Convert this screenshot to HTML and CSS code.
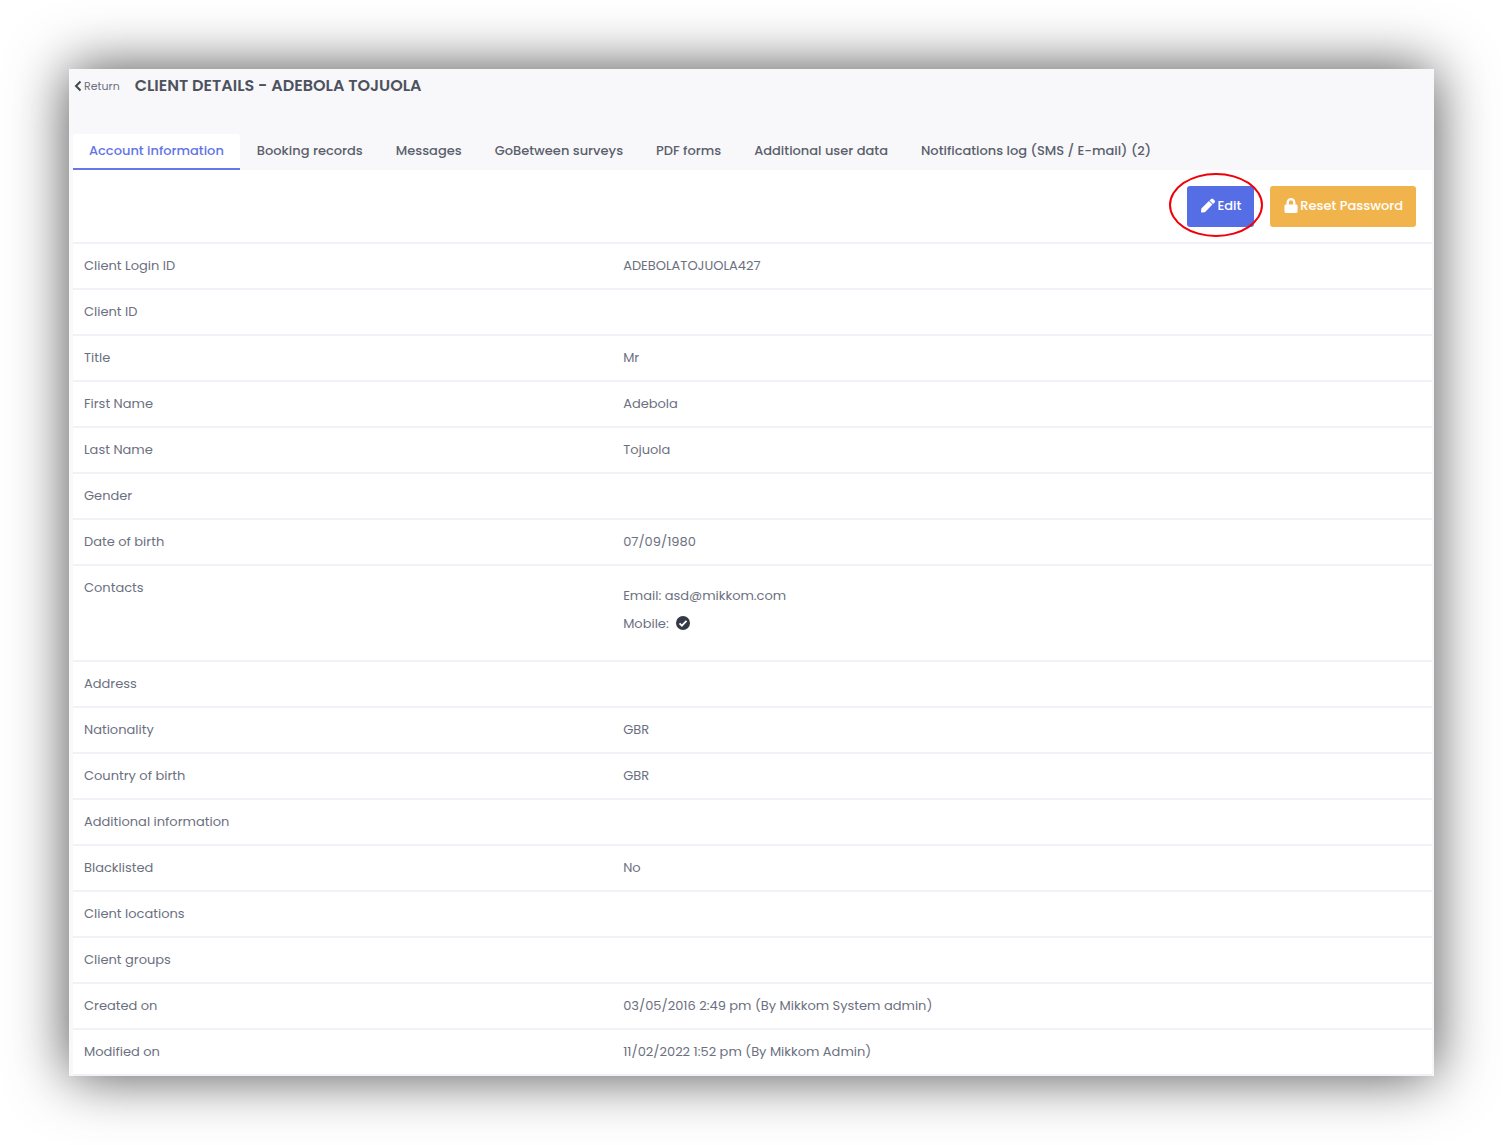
FILE: index.html
```html
<!DOCTYPE html>
<html lang="en">
<head>
<meta charset="utf-8">
<meta name="viewport" content="width=device-width, initial-scale=1">
<title>Client details - Adebola Tojuola</title>
<link rel="stylesheet" href="styles.css">
</head>
<body>
<main class="panel">
  <header class="page-head">
    <a class="return" href="#">
      <svg class="chevron" viewBox="0 0 8 12" aria-hidden="true"><path d="M6.500 1.500 2 6l4.500 4.500" fill="none" stroke="currentColor" stroke-width="2"/></svg>Return</a>
    <h1>CLIENT DETAILS - ADEBOLA TOJUOLA</h1>
  </header>
  <nav class="tabs">
    <a class="tab active" href="#" aria-current="page">Account information</a>
    <a class="tab" href="#">Booking records</a>
    <a class="tab" href="#">Messages</a>
    <a class="tab" href="#">GoBetween surveys</a>
    <a class="tab" href="#">PDF forms</a>
    <a class="tab" href="#">Additional user data</a>
    <a class="tab" href="#">Notifications log (SMS / E-mail) (2)</a>
  </nav>
  <section class="content">
    <div class="actions">
      <div class="marked">
        <button class="btn primary" type="button">
          <svg class="icon" viewBox="0 0 512 512" aria-hidden="true"><path fill="currentColor" d="M290 93 419 222 142 499 28 512A25 25 0 0 1 0 484L13 370zM498 74 438 14a48 48 0 0 0-68 0l-57 57 128 128 57-57a48 48 0 0 0 0-68z"/></svg>Edit</button>
        <span class="ring"></span>
      </div>
      <button class="btn warning" type="button">
        <svg class="icon" viewBox="0 0 448 512" aria-hidden="true"><path fill="currentColor" d="M400 224h-24v-72C376 68 308 0 224 0S72 68 72 152v72H48c-26 0-48 22-48 48v192c0 26 22 48 48 48h352c26 0 48-22 48-48V272c0-26-22-48-48-48zm-104 0H152v-72c0-40 32-72 72-72s72 32 72 72z"/></svg>Reset Password</button>
    </div>
    <table class="details">
      <tbody>
        <tr><th scope="row">Client Login ID</th><td>ADEBOLATOJUOLA427</td></tr>
        <tr><th scope="row">Client ID</th><td></td></tr>
        <tr><th scope="row">Title</th><td>Mr</td></tr>
        <tr><th scope="row">First Name</th><td>Adebola</td></tr>
        <tr><th scope="row">Last Name</th><td>Tojuola</td></tr>
        <tr><th scope="row">Gender</th><td></td></tr>
        <tr><th scope="row">Date of birth</th><td>07/09/1980</td></tr>
        <tr><th scope="row">Contacts</th><td>
          <ul class="contacts">
            <li>Email: asd@mikkom.com</li>
            <li>Mobile: <svg class="check" viewBox="0 0 14 14" role="img" aria-label="Confirmed"><circle cx="7" cy="7" r="7" fill="#343a48"/><path d="m3.500 7.300 2.400 2.400 4.600-4.800" fill="none" stroke="#fff" stroke-width="1.800"/></svg></li>
          </ul>
        </td></tr>
        <tr><th scope="row">Address</th><td></td></tr>
        <tr><th scope="row">Nationality</th><td>GBR</td></tr>
        <tr><th scope="row">Country of birth</th><td>GBR</td></tr>
        <tr><th scope="row">Additional information</th><td></td></tr>
        <tr><th scope="row">Blacklisted</th><td>No</td></tr>
        <tr><th scope="row">Client locations</th><td></td></tr>
        <tr><th scope="row">Client groups</th><td></td></tr>
        <tr><th scope="row">Created on</th><td>03/05/2016 2:49 pm (By Mikkom System admin)</td></tr>
        <tr><th scope="row">Modified on</th><td>11/02/2022 1:52 pm (By Mikkom Admin)</td></tr>
      </tbody>
    </table>
  </section>
</main>
</body>
</html>
```
FILE: styles.css
```css
* {
  box-sizing: border-box;
}

body {
  margin: 0;
  padding: 69px;
  background: #fff;
  color: #6b7080;
  font: 13px/20px Poppins, Inter, "Noto Sans", sans-serif;
}

.panel {
  padding: 0 2px 0 4px;
  background: #f8f8fb;
  box-shadow: 0 0 54px rgba(0, 0, 0, 0.7);
}

.page-head {
  display: flex;
  align-items: center;
  gap: 15px;
  height: 65px;
  padding: 7px 0 38px 1px;
}

.return {
  display: flex;
  align-items: center;
  gap: 2px;
  color: #6b7080;
  font-size: 11px;
  text-decoration: none;
}

.chevron {
  width: 8px;
  height: 12px;
  color: #41464f;
}

h1 {
  margin: 0;
  color: #4d525e;
  font-size: 16px;
  font-weight: 600;
  line-height: 20px;
}

.tabs {
  display: flex;
  gap: 1px;
}

.tab {
  height: 36px;
  padding: 7px 16px;
  border-bottom: 2px solid transparent;
  border-radius: 3px 3px 0 0;
  color: #5b606c;
  font-weight: 500;
  text-decoration: none;
  white-space: nowrap;
}

.tab.active {
  border-bottom-color: #6478e8;
  background: #fff;
  color: #6375e6;
}

.content {
  background: #fff;
}

.actions {
  display: flex;
  justify-content: flex-end;
  gap: 16px;
  padding: 16px 16px 15px;
}

.marked {
  position: relative;
}

.ring {
  position: absolute;
  inset: -13px -9px -10px -18px;
  border: 2px solid #f00008;
  border-radius: 50%;
  pointer-events: none;
}

.btn {
  display: flex;
  align-items: center;
  justify-content: center;
  gap: 2px;
  height: 41px;
  padding: 0 13px 2px 14px;
  border: 0;
  border-radius: 3px;
  color: #fff;
  font: inherit;
  font-weight: 500;
}

.primary {
  background: #556ee6;
}

.warning {
  background: #f1b44c;
}

.icon {
  width: 14px;
  height: 15px;
}

.details {
  width: 100%;
  border-collapse: separate;
  border-spacing: 0;
  border-bottom: 2px solid #f1f2f8;
  table-layout: fixed;
}

.details th,
.details td {
  height: 46px;
  padding: 12px;
  border-top: 2px solid #f1f2f8;
  font-weight: 400;
  text-align: left;
  vertical-align: top;
}

.details th {
  width: 39.6%;
  padding-left: 11px;
}

.contacts {
  margin: 0;
  padding: 4px 0 10px;
  list-style: none;
  line-height: 28px;
}

.check {
  width: 14px;
  height: 14px;
  margin-left: 4px;
  vertical-align: -2px;
}
```
